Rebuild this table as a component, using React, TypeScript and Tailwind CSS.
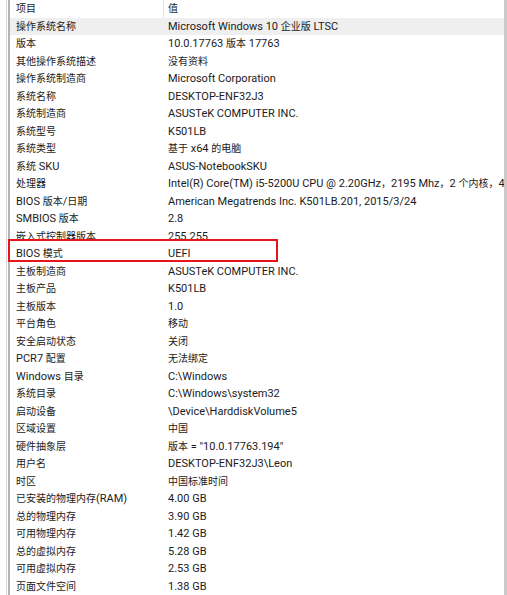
const rows: [string, string][] = [
  ["操作系统名称", "Microsoft Windows 10 企业版 LTSC"],
  ["版本", "10.0.17763 版本 17763"],
  ["其他操作系统描述", "没有资料"],
  ["操作系统制造商", "Microsoft Corporation"],
  ["系统名称", "DESKTOP-ENF32J3"],
  ["系统制造商", "ASUSTeK COMPUTER INC."],
  ["系统型号", "K501LB"],
  ["系统类型", "基于 x64 的电脑"],
  ["系统 SKU", "ASUS-NotebookSKU"],
  ["处理器", "Intel(R) Core(TM) i5-5200U CPU @ 2.20GHz，2195 Mhz，2 个内核，4 个逻辑处理器"],
  ["BIOS 版本/日期", "American Megatrends Inc. K501LB.201, 2015/3/24"],
  ["SMBIOS 版本", "2.8"],
  ["嵌入式控制器版本", "255.255"],
  ["BIOS 模式", "UEFI"],
  ["主板制造商", "ASUSTeK COMPUTER INC."],
  ["主板产品", "K501LB"],
  ["主板版本", "1.0"],
  ["平台角色", "移动"],
  ["安全启动状态", "关闭"],
  ["PCR7 配置", "无法绑定"],
  ["Windows 目录", "C:\\Windows"],
  ["系统目录", "C:\\Windows\\system32"],
  ["启动设备", "\\Device\\HarddiskVolume5"],
  ["区域设置", "中国"],
  ["硬件抽象层", "版本 = \"10.0.17763.194\""],
  ["用户名", "DESKTOP-ENF32J3\\Leon"],
  ["时区", "中国标准时间"],
  ["已安装的物理内存(RAM)", "4.00 GB"],
  ["总的物理内存", "3.90 GB"],
  ["可用物理内存", "1.42 GB"],
  ["总的虚拟内存", "5.28 GB"],
  ["可用虚拟内存", "2.53 GB"],
  ["页面文件空间", "1.38 GB"],
];

// CJK glyphs in the reference are a touch smaller than the latin text
function Mixed({ text }: { text: string }) {
  const parts = text.split(/([\u3000-\u9fff\uff00-\uffef]+)/);
  return (
    <>
      {parts.map((p, i) =>
        i % 2 === 1 ? (
          <span key={i} className="text-[10px]">
            {p}
          </span>
        ) : (
          <span key={i}>{p}</span>
        )
      )}
    </>
  );
}

export default function App() {
  return (
    <div
      className="relative flex h-[595px] w-[507px] overflow-hidden bg-white text-[11px] text-[#1b1b1b]"
      style={{ fontFamily: 'Roboto, "Noto Sans CJK SC", sans-serif' }}
    >
      {/* left frame lines */}
      <div className="w-[6px] shrink-0" />
      <div className="w-px shrink-0 bg-[#d6d6d6]" />
      <div className="w-px shrink-0" />
      <div className="w-[2px] shrink-0 bg-[#b4b4b4]" />

      <div className="flex min-w-0 flex-1 flex-col overflow-hidden">
        {/* header */}
        <div className="flex h-[17.5px] shrink-0 items-center">
          <div className="w-[153px] shrink-0 pl-[6px] leading-none">
            <Mixed text="项目" />
          </div>
          <div className="h-full w-px shrink-0 bg-[#e3e3e3]" />
          <div className="pl-[4px] leading-none">
            <Mixed text="值" />
          </div>
        </div>
        {rows.map(([k, v], i) => (
          <div
            key={k}
            className={`flex h-[17.5px] shrink-0 items-center whitespace-nowrap ${i === 0 ? "bg-[#efefef]" : ""}`}
          >
            <div className="w-[153px] shrink-0 pl-[6px] leading-none">
              <Mixed text={k} />
            </div>
            <div className="pl-[5px] leading-none">
              <Mixed text={v} />
            </div>
          </div>
        ))}
      </div>

      {/* right frame */}
      <div className="w-[3px] shrink-0 bg-[#c9c9c9]" />

      {/* highlight box */}
      <div className="absolute left-[8px] top-[239px] h-[23px] w-[270px] border-2 border-[#e8141b]" />
    </div>
  );
}
